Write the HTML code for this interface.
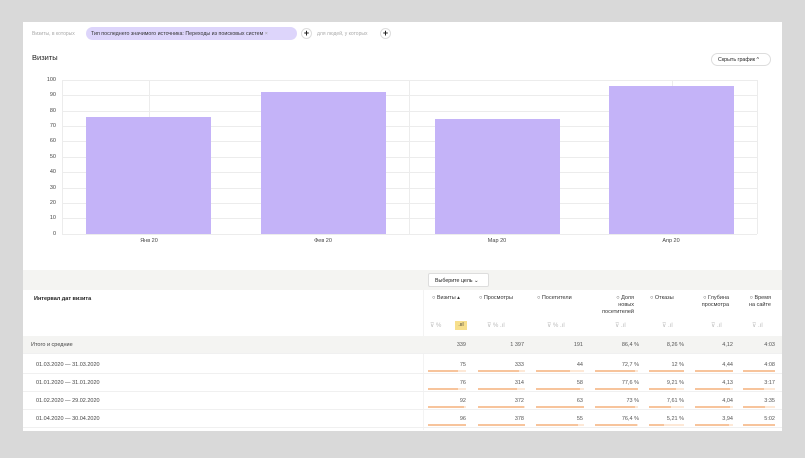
<!DOCTYPE html>
<html><head><meta charset="utf-8"><style>
*{margin:0;padding:0;box-sizing:border-box}
body{width:805px;height:458px;background:#d9d9d9;font-family:"Liberation Sans",sans-serif;position:relative;overflow:hidden;color:#222}
.p{position:absolute;left:23px;top:22px;width:759px;height:409px;background:#fff}
.a{position:absolute;white-space:nowrap}
.yl{position:absolute;left:30px;width:26px;text-align:right;font-size:5.5px;color:#444}
.hg{position:absolute;left:62px;width:695px;height:1px;background:#ececec}
.bar{position:absolute;background:#c4b3f8}
.xl{position:absolute;font-size:5.5px;color:#444;top:238px;width:60px;text-align:center}
.row{position:absolute;left:23px;width:759px;height:18px;border-bottom:1px solid #f0f0f0;font-size:5.5px}
.c{position:absolute;top:6px;text-align:right;color:#555}
.u{position:absolute;top:14px;height:1.5px;background:#fde8d6}
.u i{display:block;height:100%;background:#f7c49c}
.hd{position:absolute;top:295px;font-size:5.5px;color:#333;line-height:7px}
.ic{position:absolute;top:322px;font-size:6px;color:#bbb}
</style></head><body>
<div class="p"></div>
<div class="a" style="left:32px;top:31px;font-size:5px;color:#aaa">Визиты, в которых</div>
<div class="a" style="left:86px;top:27px;width:211px;height:13px;border-radius:7px;background:#ddd5fb;font-size:5.3px;padding:4px 0 0 5px;color:#333">Тип последнего значимого источника: Переходы из поисковых систем <span style="color:#999">×</span></div>
<div class="a" style="left:301px;top:28px;width:11px;height:11px;border-radius:50%;border:1px solid #ddd;font-size:9px;line-height:9px;text-align:center;font-weight:bold">+</div>
<div class="a" style="left:317px;top:31px;font-size:5px;color:#aaa">для людей, у которых</div>
<div class="a" style="left:380px;top:28px;width:11px;height:11px;border-radius:50%;border:1px solid #ddd;font-size:9px;line-height:9px;text-align:center;font-weight:bold">+</div>
<div class="a" style="left:32px;top:53px;font-size:7.5px;color:#222">Визиты</div>
<div class="a" style="left:711px;top:53px;width:60px;height:13px;border:1px solid #ddd;border-radius:7px;font-size:5.3px;padding:3px 0 0 6px">Скрыть график ^</div>

<div class="hg" style="top:80px"></div><div class="hg" style="top:95px"></div><div class="hg" style="top:111px"></div><div class="hg" style="top:126px"></div><div class="hg" style="top:141px"></div><div class="hg" style="top:157px"></div><div class="hg" style="top:172px"></div><div class="hg" style="top:188px"></div><div class="hg" style="top:203px"></div><div class="hg" style="top:218px"></div><div class="hg" style="top:234px"></div>
<div class="a" style="left:62px;top:80px;width:1px;height:154px;background:#ececec"></div>
<div class="a" style="left:149px;top:80px;width:1px;height:154px;background:#ececec"></div>
<div class="a" style="left:409px;top:80px;width:1px;height:154px;background:#ececec"></div>
<div class="a" style="left:672px;top:80px;width:1px;height:154px;background:#ececec"></div>
<div class="a" style="left:757px;top:80px;width:1px;height:154px;background:#ececec"></div>
<div class="yl" style="top:77px">100</div><div class="yl" style="top:92px">90</div><div class="yl" style="top:108px">80</div><div class="yl" style="top:123px">70</div><div class="yl" style="top:138px">60</div><div class="yl" style="top:154px">50</div><div class="yl" style="top:169px">40</div><div class="yl" style="top:185px">30</div><div class="yl" style="top:200px">20</div><div class="yl" style="top:215px">10</div><div class="yl" style="top:231px">0</div>
<div class="bar" style="left:86px;top:117px;width:125px;height:117px"></div>
<div class="bar" style="left:261px;top:92px;width:125px;height:142px"></div>
<div class="bar" style="left:435px;top:119px;width:125px;height:115px"></div>
<div class="bar" style="left:609px;top:86px;width:125px;height:148px"></div>
<div class="xl" style="left:119px">Янв 20</div><div class="xl" style="left:293px">Фев 20</div><div class="xl" style="left:467px">Мар 20</div><div class="xl" style="left:641px">Апр 20</div>

<div class="a" style="left:23px;top:270px;width:759px;height:20px;background:#f4f4f2"></div>
<div class="a" style="left:428px;top:273px;width:61px;height:14px;background:#fff;border:1px solid #ddd;border-radius:2px;font-size:5.3px;padding:4px 0 0 6px">Выберите цель ⌄</div>
<div class="a" style="left:423px;top:290px;width:1px;height:140px;background:#f3f3f3"></div>
<div class="a" style="left:34px;top:296px;font-size:5.5px;font-weight:bold">Интервал дат визита</div>
<div class="hd" style="left:432px">○ Визиты ▴</div>
<div class="hd" style="left:479px">○ Просмотры</div>
<div class="hd" style="left:537px">○ Посетители</div>
<div class="hd" style="left:594px;text-align:right;width:40px">○ Доля<br>новых<br>посетителей</div>
<div class="hd" style="left:650px">○ Отказы</div>
<div class="hd" style="left:695px;text-align:right;width:34px">○ Глубина<br>просмотра</div>
<div class="hd" style="left:744px;text-align:right;width:27px">○ Время<br>на сайте</div>
<div class="ic" style="left:430px">⊽ % </div><div class="a" style="left:455px;top:321px;width:12px;height:9px;background:#f7df8c;font-size:5px;text-align:center;line-height:9px;color:#333">.ııl</div>
<div class="ic" style="left:487px">⊽ % .ıl</div>
<div class="ic" style="left:547px">⊽ % .ıl</div>
<div class="ic" style="left:615px">⊽ .ıl</div>
<div class="ic" style="left:662px">⊽ .ıl</div>
<div class="ic" style="left:711px">⊽ .ıl</div>
<div class="ic" style="left:752px">⊽ .ıl</div>

<div class="row" style="top:336px;background:#f4f4f2"><span class="a" style="left:8px;top:6px;color:#444">Итого и средние</span>
<span class="c" style="right:316px">339</span><span class="c" style="right:258px">1 397</span><span class="c" style="right:199px">191</span><span class="c" style="right:143px">86,4 %</span><span class="c" style="right:98px">8,26 %</span><span class="c" style="right:49px">4,12</span><span class="c" style="right:7px">4:03</span></div>

<div class="row" style="top:356px"><span class="a" style="left:13px;top:6px;color:#444">01.03.2020 — 31.03.2020</span>
<span class="c" style="right:316px">75</span><span class="c" style="right:258px">333</span><span class="c" style="right:199px">44</span><span class="c" style="right:143px">72,7 %</span><span class="c" style="right:98px">12 %</span><span class="c" style="right:49px">4,44</span><span class="c" style="right:7px">4:08</span>
<div class="u" style="left:405px;width:38px"><i style="width:78%"></i></div><div class="u" style="left:455px;width:47px"><i style="width:88%"></i></div><div class="u" style="left:513px;width:48px"><i style="width:70%"></i></div><div class="u" style="left:572px;width:43px"><i style="width:94%"></i></div><div class="u" style="left:626px;width:35px"><i style="width:100%"></i></div><div class="u" style="left:672px;width:38px"><i style="width:100%"></i></div><div class="u" style="left:720px;width:32px"><i style="width:100%"></i></div></div>

<div class="row" style="top:374px"><span class="a" style="left:13px;top:6px;color:#444">01.01.2020 — 31.01.2020</span>
<span class="c" style="right:316px">76</span><span class="c" style="right:258px">314</span><span class="c" style="right:199px">58</span><span class="c" style="right:143px">77,6 %</span><span class="c" style="right:98px">9,21 %</span><span class="c" style="right:49px">4,13</span><span class="c" style="right:7px">3:17</span>
<div class="u" style="left:405px;width:38px"><i style="width:80%"></i></div><div class="u" style="left:455px;width:47px"><i style="width:83%"></i></div><div class="u" style="left:513px;width:48px"><i style="width:92%"></i></div><div class="u" style="left:572px;width:43px"><i style="width:100%"></i></div><div class="u" style="left:626px;width:35px"><i style="width:77%"></i></div><div class="u" style="left:672px;width:38px"><i style="width:93%"></i></div><div class="u" style="left:720px;width:32px"><i style="width:65%"></i></div></div>

<div class="row" style="top:392px"><span class="a" style="left:13px;top:6px;color:#444">01.02.2020 — 29.02.2020</span>
<span class="c" style="right:316px">92</span><span class="c" style="right:258px">372</span><span class="c" style="right:199px">63</span><span class="c" style="right:143px">73 %</span><span class="c" style="right:98px">7,61 %</span><span class="c" style="right:49px">4,04</span><span class="c" style="right:7px">3:35</span>
<div class="u" style="left:405px;width:38px"><i style="width:96%"></i></div><div class="u" style="left:455px;width:47px"><i style="width:98%"></i></div><div class="u" style="left:513px;width:48px"><i style="width:100%"></i></div><div class="u" style="left:572px;width:43px"><i style="width:94%"></i></div><div class="u" style="left:626px;width:35px"><i style="width:63%"></i></div><div class="u" style="left:672px;width:38px"><i style="width:91%"></i></div><div class="u" style="left:720px;width:32px"><i style="width:70%"></i></div></div>

<div class="row" style="top:410px"><span class="a" style="left:13px;top:6px;color:#444">01.04.2020 — 30.04.2020</span>
<span class="c" style="right:316px">96</span><span class="c" style="right:258px">378</span><span class="c" style="right:199px">55</span><span class="c" style="right:143px">76,4 %</span><span class="c" style="right:98px">5,21 %</span><span class="c" style="right:49px">3,94</span><span class="c" style="right:7px">5:02</span>
<div class="u" style="left:405px;width:38px"><i style="width:100%"></i></div><div class="u" style="left:455px;width:47px"><i style="width:100%"></i></div><div class="u" style="left:513px;width:48px"><i style="width:87%"></i></div><div class="u" style="left:572px;width:43px"><i style="width:98%"></i></div><div class="u" style="left:626px;width:35px"><i style="width:43%"></i></div><div class="u" style="left:672px;width:38px"><i style="width:89%"></i></div><div class="u" style="left:720px;width:32px"><i style="width:100%"></i></div></div>
</body></html>
